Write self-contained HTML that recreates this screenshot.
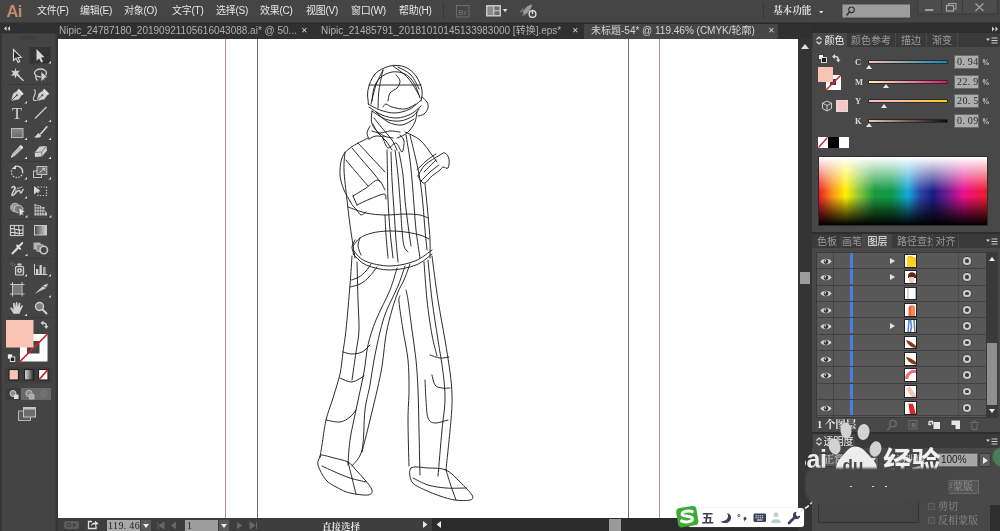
<!DOCTYPE html>
<html lang="zh">
<head>
<meta charset="utf-8">
<title>Illustrator</title>
<style>
*{box-sizing:border-box;margin:0;padding:0}
html,body{width:1000px;height:531px;overflow:hidden;background:#454545}
body{position:relative;will-change:transform;font-family:"Liberation Sans","Noto Sans CJK SC",sans-serif;font-size:11px;color:#e0e0e0}
.abs{position:absolute}
.song{font-family:"Liberation Serif","Noto Serif CJK SC",serif}
#menubar{left:0;top:0;width:1000px;height:23px;background:#454545;border-bottom:1px solid #3a3a3a}
#menubar span{position:absolute;top:4px;white-space:nowrap;font-size:10px;line-height:14px;color:#e6e6e6;letter-spacing:-0.250px}
#tabbar{left:58px;top:23px;width:754px;height:16px;background:#303030;border-top:1px solid #282828}
#tabbar span{position:absolute;top:0px;font-size:10px;line-height:14px;white-space:nowrap;color:#b0b0b0}
#tabbar .x{color:#d0d0d0;font-size:7.500px;margin-left:-1px}
#canvas{left:58px;top:39px;width:740px;height:479px;background:#fff}
</style>
</head>
<body>
<div id="menubar" class="abs">
<span style="left:6.500px;top:1px;font-size:16.500px;line-height:20px;color:#c48c6c;font-weight:bold;letter-spacing:-0.700px">Ai</span>
<span style="left:37px">文件(F)</span>
<span style="left:80px">编辑(E)</span>
<span style="left:124px">对象(O)</span>
<span style="left:172px">文字(T)</span>
<span style="left:216px">选择(S)</span>
<span style="left:260px">效果(C)</span>
<span style="left:306px">视图(V)</span>
<span style="left:351px">窗口(W)</span>
<span style="left:399px">帮助(H)</span>
<span class="song" style="left:773px;font-size:9.700px;letter-spacing:-0.100px;font-weight:bold;color:#dcdcdc">基本功能</span>
<svg class="abs" style="left:440px;top:0" width="110" height="23" viewBox="440 0 110 23">
 <path d="M443.500 3V19" stroke="#383838" stroke-width="1"/>
 <rect x="456.500" y="5.500" width="12.500" height="11.500" fill="none" stroke="#6c6c6c" stroke-width="1"/>
 <text x="458.300" y="14.500" font-family="'Liberation Sans',sans-serif" font-weight="bold" font-size="7.500" fill="#6c6c6c">Br</text>
 <rect x="486" y="5" width="15" height="11.500" fill="#c6c6c6"/>
 <rect x="487.500" y="6.500" width="5.500" height="8.500" fill="#8a8a8a"/><rect x="494.300" y="6.500" width="5.200" height="3.700" fill="#6e6e6e"/><rect x="494.300" y="11.300" width="5.200" height="3.700" fill="#6e6e6e"/>
 <path d="M502.800 9h4.600l-2.300 3.200z" fill="#e0e0e0"/>
 <path d="M532 4.500C528 5 524 9 522.500 13L525 14.500C528 13 531.500 9 532 4.500Z" fill="#9a9a9a"/>
 <path d="M520.500 12L523.500 9M522.500 15.500L526 13.500" stroke="#8a8a8a" stroke-width="1.200"/>
 <circle cx="532.500" cy="14" r="3.400" fill="#4a4a4a" stroke="#e0e0e0" stroke-width="1.300"/><path d="M532.500 9.800V14" stroke="#e0e0e0" stroke-width="1.300"/>
</svg>
<div class="abs" style="left:763px;top:3px;width:1px;height:16px;background:#383838"></div>
<svg class="abs" style="left:815px;top:0" width="185" height="23" viewBox="815 0 185 23">
 <path d="M819 11h4.400l-2.200 2.600z" fill="#e6e6e6"/>
 <rect x="842" y="4" width="68.500" height="14" fill="#9c9c9c" stroke="#3c3c3c" stroke-width="0.800"/>
 <circle cx="851.500" cy="9.800" r="2.800" fill="none" stroke="#2e2e2e" stroke-width="1.100"/><path d="M849.500 12L846.500 15.500" stroke="#2e2e2e" stroke-width="1.400"/>
 <rect x="918" y="-1" width="23.500" height="15" fill="#4c4c4c" stroke="#3a3a3a" stroke-width="1"/>
 <rect x="941.500" y="-1" width="21" height="15" fill="#4c4c4c" stroke="#3a3a3a" stroke-width="1"/>
 <rect x="962.500" y="-1" width="35" height="15" fill="#4c4c4c" stroke="#3a3a3a" stroke-width="1"/>
 <path d="M925 10h8.500" stroke="#a8a8a8" stroke-width="1.800"/>
 <path d="M948.500 5V3.500h7.500v5.500h-1.800" fill="none" stroke="#a0a0a0" stroke-width="1.100"/><rect x="946.500" y="5.500" width="7" height="5.500" fill="none" stroke="#a8a8a8" stroke-width="1.200"/>
 <path d="M975.500 3.500L983.500 11M983.500 3.500L975.500 11" stroke="#a0a0a0" stroke-width="1.300"/>
</svg>
</div>
<div id="tabbar" class="abs">
<span style="left:1px">Nipic_24787180_20190921105616043088.ai* @ 50...</span><span class="x" style="left:244px">✕</span>
<span style="left:263px">Nipic_21485791_20181010145133983000 [转换].eps*</span><span class="x" style="left:515px">✕</span>
<div class="abs" style="left:526px;top:0;width:194px;height:15px;background:#464646"></div>
<span style="left:533px;color:#d4d4d4">未标题-54* @ 119.46% (CMYK/轮廓)</span><span class="x" style="left:711px">✕</span>
</div>
<div id="canvas" class="abs"></div>
<svg id="tb" class="abs" style="left:0;top:23px" width="58" height="508" viewBox="0 23 58 508">
<defs>
<linearGradient id="gh" x1="0" y1="0" x2="1" y2="0"><stop offset="0" stop-color="#e8e8e8"/><stop offset="1" stop-color="#222"/></linearGradient>
<linearGradient id="gv" x1="0" y1="0" x2="0" y2="1"><stop offset="0" stop-color="#8a8a8a"/><stop offset="1" stop-color="#6a6a6a"/></linearGradient>
<linearGradient id="gh2" x1="0" y1="0" x2="1" y2="0"><stop offset="0" stop-color="#4a4a4a"/><stop offset="1" stop-color="#d4d4d4"/></linearGradient>
<path id="tri" d="M0 0 L-2.6 0 L0 -2.6Z" fill="#d8d8d8"/>
</defs>
<rect x="0" y="23" width="58" height="508" fill="#444"/>
<rect x="0" y="23" width="58" height="10" fill="#303030"/>
<rect x="0" y="33" width="58" height="1" fill="#3d3d3d"/>
<rect x="0" y="23" width="1.500" height="508" fill="#343434"/>
<rect x="55.500" y="33" width="2.500" height="498" fill="#363636"/>
<path d="M6.5 26 L4 28.5 L6.5 31Z M10 26 L7.5 28.5 L10 31Z" fill="#cfcfcf"/>
<g fill="#3a3a3a"><rect x="20" y="36" width="16" height="1"/><rect x="20" y="38" width="16" height="1"/></g>
<!-- separators -->
<g fill="#3a3a3a"><rect x="7" y="84" width="45" height="1"/><rect x="7" y="161" width="45" height="1"/><rect x="7" y="219" width="45" height="1"/><rect x="7" y="258" width="45" height="1"/><rect x="7" y="317" width="45" height="1"/></g>
<!-- row1 -->
<rect x="29.5" y="47" width="21" height="16.5" fill="#343434"/>
<path d="M13.5 49.5 L13.500 60.5 L16 58.2 L18 62.3 L19.8 61.4 L17.9 57.500 L21.2 57.2Z" fill="#2c2c2c" stroke="#dcdcdc" stroke-width="1.100" stroke-linejoin="miter"/>
<path d="M36.500 49 L36.500 60.800 L39.2 58.4 L41.2 62.500 L43 61.600 L41 57.600 L44.5 57.300Z" fill="#d8d8d8"/>
<use href="#tri" x="51" y="63.5"/>
<!-- row2 magic wand -->
<path d="M15.5 68 L16.600 71.300 L20 70.500 L17.800 73.200 L20 76 L16.700 75.200 L15.500 78.500 L14.300 75.200 L11 76 L13.200 73.200 L11 70.500 L14.400 71.300Z" fill="#cfcfcf"/>
<path d="M17.500 75 L23.500 80.800" stroke="#cfcfcf" stroke-width="1.500"/>
<!-- lasso -->
<ellipse cx="40.5" cy="73" rx="6" ry="4" fill="none" stroke="#cfcfcf" stroke-width="1.300"/>
<path d="M36 76 C35 78 36.500 79.500 37.500 80.500" fill="none" stroke="#cfcfcf" stroke-width="1.200"/>
<path d="M41 71.500 L41 81.500 L43.300 79.500 L44.800 80.800 L44.500 78 L47.500 77.200Z" fill="#cfcfcf" stroke="#444" stroke-width="0.600"/>
<!-- row3 pen -->
<g id="pen"><path d="M11 101 L13.200 93.500 L18.500 90 L22.500 94 L19 99.200Z" fill="#cfcfcf"/><path d="M11 101 L16.500 95.500" stroke="#444" stroke-width="0.900"/><circle cx="16.800" cy="95.200" r="1" fill="#444"/><path d="M18.800 88.800 L23.700 93.700 L22.200 95.200 L17.300 90.300Z" fill="#e2e2e2"/></g>
<use href="#tri" x="27" y="103.500"/>
<use href="#pen" x="25.500" y="0"/>
<path d="M34 89.500 C36.500 90.500 35 94.500 33.800 97 C32.500 99.800 34 101.200 36.500 100.200" fill="none" stroke="#cfcfcf" stroke-width="1.100"/>
<!-- row4 T -->
<text x="17" y="119.300" font-family="Liberation Serif,serif" font-size="16.500" text-anchor="middle" fill="#d4d4d4">T</text>
<use href="#tri" x="27" y="122"/>
<path d="M35 118.500 L46.500 107" stroke="#cfcfcf" stroke-width="1.200"/>
<use href="#tri" x="51" y="122"/>
<!-- row5 rect / brush -->
<rect x="11.500" y="128.500" width="11.500" height="9" fill="url(#gv)" stroke="#b8b8b8" stroke-width="1"/>
<use href="#tri" x="27" y="140"/>
<path d="M47.300 126.200 L40.300 134.200" stroke="#d8d8d8" stroke-width="1.600"/>
<path d="M38.200 133 L41.300 135.800 C40.500 137.800 36.500 138.500 33.800 137 C36 136.500 36.800 134.800 38.200 133Z" fill="#d8d8d8"/>
<use href="#tri" x="51" y="140"/>
<!-- row6 pencil / eraser -->
<path d="M20 145.500 L22.800 148.300 L14.500 156.300 L11 157.600 L12.200 153.800Z" fill="#bdbdbd"/>
<path d="M19.200 146.300 L22 149.100 L23 148 C23.500 147 21.500 145 20.400 145.300Z" fill="#e6e6e6"/>
<path d="M11 157.600 L11.600 155.600 L13 157Z" fill="#eee"/>
<use href="#tri" x="27" y="159"/>
<path d="M39.500 146.500 L46.500 146 L47 150.500 L42 156.500 L35 157 L34.700 152.500Z" fill="#cfcfcf"/>
<path d="M34.700 152.500 L41.600 152 L46.500 146 M41.600 152 L42 156.500" stroke="#6a6a6a" stroke-width="0.800" fill="none"/>
<use href="#tri" x="51" y="159"/>
<!-- row7 rotate / scale -->
<path d="M14.500 166.800 A5.600 5.600 0 0 1 22.600 172" fill="none" stroke="#cfcfcf" stroke-width="1.400"/>
<path d="M22.600 172 A5.600 5.600 0 1 1 12.500 168.600" fill="none" stroke="#cfcfcf" stroke-width="1.400" stroke-dasharray="1.400 1.500"/>
<path d="M12 168.800 L15.800 165.200 L16 169.200Z" fill="#dcdcdc"/>
<use href="#tri" x="27" y="179.500"/>
<rect x="33.500" y="171" width="8" height="6.500" fill="none" stroke="#c4c4c4" stroke-width="1"/>
<rect x="37" y="166.500" width="9.800" height="8" fill="#6a6a6a" stroke="#c4c4c4" stroke-width="1"/>
<path d="M39.500 172.500 L44.500 168.500 M42 168.300 L44.800 168.300 L44.800 171" stroke="#d8d8d8" stroke-width="0.900" fill="none"/>
<use href="#tri" x="51" y="179.500"/>
<!-- row8 width / free transform -->
<path d="M11.500 188 C13 185.500 15.500 186 14.500 189 C13.500 192 11 194 12 195.500 C13.500 196.500 16 191.500 18.500 190.500 C20.500 189.800 19.500 193 21 193 C22.500 192.500 22 189 23.800 189.500" fill="none" stroke="#cfcfcf" stroke-width="1.500"/>
<path d="M14 186 C17 188 16 193 14 195.500 M17 188 C19 188.500 21 187.500 22.500 187" fill="none" stroke="#cfcfcf" stroke-width="0.900"/>
<use href="#tri" x="27" y="198.500"/>
<path d="M34 186 L34 194.500 L36.300 192.600 L40.500 191Z" fill="#d4d4d4"/>
<rect x="38" y="187" width="8.500" height="8.500" fill="none" stroke="#cfcfcf" stroke-width="1.200" stroke-dasharray="1.200 1.600"/>
<!-- row9 shape builder / perspective -->
<circle cx="15" cy="207.500" r="4.300" fill="#8a8a8a" stroke="#c4c4c4" stroke-width="1"/>
<ellipse cx="18.500" cy="209" rx="4.500" ry="3.800" fill="#7a7a7a" stroke="#c4c4c4" stroke-width="1"/>
<circle cx="13.500" cy="207" r="1.400" fill="none" stroke="#c4c4c4" stroke-width="0.700"/>
<path d="M19 207.500 L19.500 216.300 L21.400 214.400 L23.800 215.600 L22.500 212.800 L25 211.800Z" fill="#e0e0e0" stroke="#444" stroke-width="0.500"/>
<use href="#tri" x="27.500" y="217.500"/>
<path d="M34.500 203.500 L34.500 215.500 L47 215.500 L47 212.500 L44.500 210 L44.500 207 L42 207 L39.500 205 L37 205 Z" fill="#c8c8c8"/>
<path d="M36.800 204 V215.500 M39.300 205 V215.500 M41.800 207 V215.500 M44.300 209 V215.500 M34.500 206.500 H39.500 M34.500 209.300 H44.500 M34.500 212.300 H47" stroke="#444" stroke-width="0.700" fill="none"/>
<use href="#tri" x="51.500" y="217.500"/>
<!-- row10 mesh / gradient -->
<rect x="10.500" y="225.500" width="12.500" height="10" fill="#3a3a3a" stroke="#c8c8c8" stroke-width="1.200"/>
<path d="M10.500 229 C14 227 18 232 23 229.500 M10.500 232.800 C14 231 18 235 23 233 M14.500 225.500 C13 229 17 232 14.500 235.500 M19 225.500 C17.500 229 21 232 19 235.500" fill="none" stroke="#d8d8d8" stroke-width="1.100"/>
<rect x="34.500" y="225.500" width="12" height="9.500" fill="url(#gh2)" stroke="#c4c4c4" stroke-width="1"/>
<!-- row11 eyedropper / blend -->
<path d="M12 254.500 L11.300 253.300 L17.500 246.500 L19.300 248.200 L13 254.300Z" fill="#d8d8d8"/>
<path d="M17 245.500 L20.300 248.800 M18.300 247 L22.300 243 " stroke="#dcdcdc" stroke-width="1.800" stroke-linecap="round" fill="none"/>
<use href="#tri" x="27.500" y="256"/>
<rect x="33.500" y="242.500" width="7" height="7" fill="#b4b4b4"/>
<rect x="36.500" y="244.500" width="7" height="7" rx="1.500" fill="#8c8c8c" stroke="#bdbdbd" stroke-width="0.800"/>
<circle cx="43.800" cy="250" r="3.700" fill="#444" stroke="#c8c8c8" stroke-width="1.600"/>
<!-- row12 symbol sprayer / graph -->
<rect x="15.500" y="266.500" width="8" height="8.500" rx="1" fill="#5a5a5a" stroke="#cfcfcf" stroke-width="1.200"/>
<rect x="17.500" y="263.500" width="4" height="2" fill="#cfcfcf"/>
<circle cx="19.500" cy="270.500" r="2.300" fill="#e2e2e2"/><circle cx="19.500" cy="270.500" r="0.900" fill="#222"/>
<path d="M10 264 h1.200 M12.500 263 h1.200 M12 265.500 h1.200 M14.300 264.500 h1" stroke="#9a9a9a" stroke-width="0.800"/>
<use href="#tri" x="27" y="276.500"/>
<path d="M34.500 264 V274.500 H47.500" stroke="#cfcfcf" stroke-width="1" fill="none"/>
<rect x="36" y="269" width="2.300" height="5" fill="#cfcfcf"/><rect x="39.500" y="265" width="2.300" height="9" fill="#cfcfcf"/><rect x="43" y="267" width="2.600" height="7" fill="#a8a8a8"/>
<use href="#tri" x="51" y="276.500"/>
<!-- row13 artboard / slice -->
<rect x="13" y="285" width="8.500" height="8.500" fill="#7a7a7a"/>
<path d="M12.500 282 V296.500 M22 282 V296.500 M10 284.500 H24.500 M10 294 H24.500" stroke="#c4c4c4" stroke-width="1" fill="none"/>
<path d="M34.500 294 L44 285 L48.300 283.500 L45.500 288.500 L40 291Z" fill="#cfcfcf"/>
<path d="M43 286 L46 288" stroke="#444" stroke-width="0.800"/>
<use href="#tri" x="51" y="297.500"/>
<!-- row14 hand / zoom -->
<path d="M13.500 313.800 L10.300 308.500 C10 307.500 11.300 307.200 12 308 L13.500 309.800 L13 303.500 C13.200 302.300 14.600 302.500 14.700 303.500 L15.300 307 L15.800 302.700 C16 301.600 17.500 301.700 17.500 302.800 L17.600 307 L18.800 303.300 C19.200 302.300 20.600 302.700 20.400 303.800 L19.800 307.800 L21.600 305.500 C22.300 304.800 23.300 305.500 22.800 306.500 L20.500 311 L19.500 313.800Z" fill="#cfcfcf"/>
<use href="#tri" x="27" y="316"/>
<circle cx="39.500" cy="306.500" r="4" fill="#7c7c7c" stroke="#cfcfcf" stroke-width="1.400"/>
<path d="M42.500 309.500 L46.500 313.500" stroke="#cfcfcf" stroke-width="2" stroke-linecap="round"/>
<!-- fill / stroke -->
<rect x="20" y="334" width="27.500" height="27.500" fill="#fff"/>
<rect x="27" y="341" width="12.500" height="12.500" fill="#444"/>
<path d="M19.500 362 L47.500 334" stroke="#c8232c" stroke-width="1.700"/>
<rect x="6" y="320" width="27.500" height="27.500" fill="#f9c4b3"/>
<path d="M40.500 323 L43.500 320.500 V322.300 C46 322.300 47 323.500 47 326 H48.500 L46.200 329 L44 326 H45.500 C45.500 324.500 45 323.800 43.500 323.800 V325.500Z" fill="#cfcfcf"/>
<rect x="7.500" y="354" width="5" height="5" fill="#f0f0f0" stroke="#333" stroke-width="0.600"/>
<rect x="10.300" y="357" width="4.500" height="4.500" fill="#222" stroke="#f0f0f0" stroke-width="0.900"/>
<!-- colour mode -->
<rect x="5" y="367" width="47" height="16" fill="#3e3e3e"/>
<rect x="9" y="369.500" width="9.500" height="10.500" fill="#f9c4b3" stroke="#262626" stroke-width="1.200"/>
<rect x="24.500" y="369.500" width="9.500" height="10.500" fill="url(#gh)" stroke="#262626" stroke-width="1.200"/>
<rect x="38.500" y="369.500" width="9.500" height="10.500" fill="#fff" stroke="#262626" stroke-width="1.200"/>
<path d="M39.200 379.500 L47.500 370" stroke="#d0202a" stroke-width="1.800"/>
<!-- draw modes -->
<rect x="6" y="388" width="45" height="12" fill="#6a6a6a"/>
<rect x="6" y="388" width="15" height="12" fill="#3c3c3c"/>
<circle cx="13" cy="393.500" r="3" fill="#8a8a8a" stroke="#cfcfcf" stroke-width="1"/><rect x="14" y="394.500" width="4.500" height="4.500" fill="#dcdcdc"/>
<circle cx="29" cy="393.500" r="3.200" fill="#8a8a8a" stroke="#bdbdbd" stroke-width="1"/><rect x="29.500" y="394.500" width="4.500" height="4.500" fill="#a8a8a8" stroke="#c8c8c8" stroke-width="0.600"/>
<circle cx="43.500" cy="393.500" r="3" fill="none" stroke="#7c7c7c" stroke-width="1"/><circle cx="43.500" cy="393.500" r="1.300" fill="#777"/>
<!-- screen mode -->
<rect x="18.500" y="411" width="12" height="9.500" fill="#5c5c5c" stroke="#b4b4b4" stroke-width="1"/>
<rect x="23.500" y="407.500" width="12" height="9.500" fill="#6c6c6c" stroke="#c4c4c4" stroke-width="1"/>
<rect x="23.500" y="407.500" width="12" height="2" fill="#c4c4c4"/>
</svg>
<svg class="abs" style="left:58px;top:39px" width="740" height="479" viewBox="58 39 740 479">
<path d="M225.5 39V518M659.500 39V518" stroke="#c58a8a" stroke-width="1" fill="none"/>
<path d="M257.500 39V518M628.500 39V518" stroke="#6e6e6e" stroke-width="1" fill="none"/>
<g fill="none" stroke="#141414" stroke-width="0.900" stroke-linecap="round" stroke-linejoin="round">
<path d="M368.5 104.0 C368.4 101.7 366.9 95.0 368.0 90.0 C369.1 85.0 371.3 78.0 375.0 74.0 C378.7 70.0 385.0 67.2 390.0 66.0 C395.0 64.8 400.7 65.3 405.0 67.0 C409.3 68.7 413.2 72.2 416.0 76.0 C418.8 79.8 421.2 85.8 422.0 90.0 C422.8 94.2 421.2 99.2 421.0 101.0"/>
<path d="M368.0 104.0 C370.0 105.0 375.5 108.5 380.0 110.0 C384.5 111.5 390.0 113.2 395.0 113.0 C400.0 112.8 405.7 111.2 410.0 109.0 C414.3 106.8 419.2 101.5 421.0 100.0"/>
<path d="M369.0 107.0 C371.2 108.3 377.3 113.2 382.0 115.0 C386.7 116.8 392.2 118.2 397.0 118.0 C401.8 117.8 407.0 116.0 411.0 114.0 C415.0 112.0 419.3 107.3 421.0 106.0"/>
<path d="M372.0 111.0 C374.2 112.3 380.3 117.3 385.0 119.0 C389.7 120.7 395.3 121.5 400.0 121.0 C404.7 120.5 409.8 118.0 413.0 116.0 C416.2 114.0 418.0 110.2 419.0 109.0"/>
<path d="M369.0 85.0 C373.3 85.0 386.3 85.0 395.0 85.0 C403.7 85.0 416.7 85.0 421.0 85.0"/>
<path d="M371.0 104.0 C371.8 100.8 374.0 90.7 376.0 85.0 C378.0 79.3 381.8 72.5 383.0 70.0"/>
<path d="M383.0 70.0 C382.3 73.3 379.8 83.7 379.0 90.0 C378.2 96.3 378.2 105.0 378.0 108.0"/>
<path d="M393.0 66.0 C395.5 68.0 403.7 73.2 408.0 78.0 C412.3 82.8 417.2 92.2 419.0 95.0"/>
<path d="M388.0 101.0 C388.3 99.7 388.5 95.2 390.0 93.0 C391.5 90.8 395.3 90.0 397.0 88.0 C398.7 86.0 400.2 83.2 400.0 81.0 C399.8 78.8 396.7 76.0 396.0 75.0"/>
<path d="M383.0 107.0 C383.5 106.5 384.5 104.0 386.0 104.0 C387.5 104.0 388.8 106.2 392.0 107.0 C395.2 107.8 401.0 109.5 405.0 109.0 C409.0 108.5 414.2 104.8 416.0 104.0"/>
<path d="M422.0 97.0 C422.8 97.8 426.0 100.2 427.0 102.0 C428.0 103.8 428.5 106.0 428.0 108.0 C427.5 110.0 425.7 112.7 424.0 114.0 C422.3 115.3 419.0 115.7 418.0 116.0"/>
<path d="M372.0 111.0 C371.9 112.8 370.8 118.8 371.5 122.0 C372.2 125.2 373.9 127.7 376.0 130.0 C378.1 132.3 381.2 134.7 384.0 136.0 C386.8 137.3 391.5 137.7 393.0 138.0"/>
<path d="M417.0 112.0 C416.7 113.7 416.2 119.0 415.0 122.0 C413.8 125.0 411.8 127.8 410.0 130.0 C408.2 132.2 406.2 133.7 404.0 135.0 C401.8 136.3 398.2 137.5 397.0 138.0"/>
<path d="M374.0 118.0 C375.3 119.7 379.0 124.3 382.0 128.0 C385.0 131.7 389.5 136.3 392.0 140.0 C394.5 143.7 396.2 148.3 397.0 150.0"/>
<path d="M372.0 131.0 C373.3 131.3 377.0 133.0 380.0 133.0 C383.0 133.0 386.7 131.2 390.0 131.0 C393.3 130.8 398.3 131.8 400.0 132.0"/>
<path d="M372.0 101.0 C372.3 98.8 372.7 91.8 374.0 88.0 C375.3 84.2 377.0 80.7 380.0 78.0 C383.0 75.3 387.8 72.7 392.0 72.0 C396.2 71.3 401.3 72.2 405.0 74.0 C408.7 75.8 411.5 79.0 414.0 83.0 C416.5 87.0 419.0 95.5 420.0 98.0"/>
<path d="M398.0 67.0 C400.2 68.3 407.5 71.3 411.0 75.0 C414.5 78.7 417.7 86.7 419.0 89.0"/>
<path d="M376.0 112.0 C378.0 113.7 383.7 119.8 388.0 122.0 C392.3 124.2 397.7 125.5 402.0 125.0 C406.3 124.5 412.0 120.0 414.0 119.0"/>
<path d="M373.0 124.0 C373.8 125.5 375.8 130.2 378.0 133.0 C380.2 135.8 383.7 138.2 386.0 141.0 C388.3 143.8 391.0 148.5 392.0 150.0"/>
<path d="M369.0 139.0 C370.2 138.5 373.5 136.3 376.0 136.0 C378.5 135.7 382.7 136.8 384.0 137.0"/>
<path d="M370.0 126.0 C369.5 127.2 367.2 130.8 367.0 133.0 C366.8 135.2 368.7 138.0 369.0 139.0"/>
<path d="M368.0 138.0 C365.0 139.7 354.3 144.7 350.0 148.0 C345.7 151.3 343.7 153.5 342.0 158.0 C340.3 162.5 339.7 169.7 340.0 175.0 C340.3 180.3 342.3 185.7 344.0 190.0 C345.7 194.3 349.0 199.2 350.0 201.0"/>
<path d="M345.0 152.0 C344.8 155.0 343.7 162.0 344.0 170.0 C344.3 178.0 346.0 190.8 347.0 200.0 C348.0 209.2 349.0 217.5 350.0 225.0 C351.0 232.5 352.2 239.5 353.0 245.0 C353.8 250.5 354.7 255.8 355.0 258.0"/>
<path d="M353.0 196.0 C355.2 194.7 361.8 190.7 366.0 188.0 C370.2 185.3 374.8 179.7 378.0 180.0 C381.2 180.3 383.8 188.3 385.0 190.0"/>
<path d="M357.0 205.0 C359.2 204.0 365.5 200.8 370.0 199.0 C374.5 197.2 381.3 194.0 384.0 194.0 C386.7 194.0 385.7 198.2 386.0 199.0"/>
<path d="M353 196 L357 205"/>
<path d="M357.0 210.0 C357.7 210.8 359.5 214.7 361.0 215.0 C362.5 215.3 365.2 212.5 366.0 212.0"/>
<path d="M352.0 148.0 C353.7 150.0 358.2 155.5 362.0 160.0 C365.8 164.5 372.0 171.3 375.0 175.0 C378.0 178.7 379.2 180.8 380.0 182.0"/>
<path d="M358.0 143.0 C360.3 145.5 367.5 153.2 372.0 158.0 C376.5 162.8 382.8 169.7 385.0 172.0"/>
<path d="M348.0 207.0 C351.0 208.0 359.8 211.7 366.0 213.0 C372.2 214.3 378.5 214.8 385.0 215.0 C391.5 215.2 399.2 214.0 405.0 214.0 C410.8 214.0 416.2 214.3 420.0 215.0 C423.8 215.7 426.7 217.5 428.0 218.0"/>
<path d="M405.0 132.0 C407.5 133.3 415.5 136.2 420.0 140.0 C424.5 143.8 429.2 151.3 432.0 155.0 C434.8 158.7 436.2 160.8 437.0 162.0"/>
<path d="M418.0 176.0 C419.2 174.2 421.3 168.5 425.0 165.0 C428.7 161.5 436.7 157.0 440.0 155.0 C443.3 153.0 443.5 152.3 445.0 153.0 C446.5 153.7 448.5 156.5 449.0 159.0 C449.5 161.5 449.0 166.7 448.0 168.0 C447.0 169.3 444.3 166.7 443.0 167.0 C441.7 167.3 441.8 168.5 440.0 170.0 C438.2 171.5 434.5 173.8 432.0 176.0 C429.5 178.2 426.8 182.2 425.0 183.0 C423.2 183.8 422.2 182.2 421.0 181.0 C419.8 179.8 418.5 176.8 418.0 176.0"/>
<path d="M417.0 170.0 C418.5 168.5 422.8 163.7 426.0 161.0 C429.2 158.3 434.3 155.2 436.0 154.0"/>
<path d="M421.0 181.0 C422.5 179.5 427.0 174.7 430.0 172.0 C433.0 169.3 437.5 166.2 439.0 165.0"/>
<path d="M425.0 184.0 C425.5 189.2 427.2 205.7 428.0 215.0 C428.8 224.3 429.7 232.8 430.0 240.0 C430.3 247.2 430.0 255.0 430.0 258.0"/>
<path d="M387.0 150.0 C387.1 154.2 387.3 166.7 387.5 175.0 C387.7 183.3 387.6 190.8 388.0 200.0 C388.4 209.2 389.2 220.3 390.0 230.0 C390.8 239.7 392.5 253.3 393.0 258.0"/>
<path d="M391.0 152.0 C391.2 156.7 391.5 170.3 392.0 180.0 C392.5 189.7 393.3 200.0 394.0 210.0 C394.7 220.0 395.3 231.3 396.0 240.0 C396.7 248.7 397.7 258.3 398.0 262.0"/>
<path d="M395.0 150.0 C395.5 154.2 397.2 166.7 398.0 175.0 C398.8 183.3 399.3 190.8 400.0 200.0 C400.7 209.2 401.3 222.3 402.0 230.0 C402.7 237.7 403.0 242.3 404.0 246.0 C405.0 249.7 407.3 251.0 408.0 252.0"/>
<path d="M406.0 135.0 C406.7 139.2 409.0 152.5 410.0 160.0 C411.0 167.5 411.3 172.5 412.0 180.0 C412.7 187.5 413.3 196.7 414.0 205.0 C414.7 213.3 415.0 221.2 416.0 230.0 C417.0 238.8 419.3 253.3 420.0 258.0"/>
<path d="M410.0 135.0 C411.0 139.2 414.3 152.5 416.0 160.0 C417.7 167.5 418.8 172.5 420.0 180.0 C421.2 187.5 422.2 196.7 423.0 205.0 C423.8 213.3 424.3 222.5 425.0 230.0 C425.7 237.5 426.7 246.7 427.0 250.0"/>
<path d="M383.0 138.0 C383.8 139.7 385.8 147.2 388.0 148.0 C390.2 148.8 393.7 142.3 396.0 143.0 C398.3 143.7 400.7 152.3 402.0 152.0 C403.3 151.7 404.3 143.8 404.0 141.0 C403.7 138.2 400.7 136.0 400.0 135.0"/>
<path d="M353.0 246.0 C354.2 244.7 356.8 240.2 360.0 238.0 C363.2 235.8 367.3 234.2 372.0 233.0 C376.7 231.8 382.5 231.2 388.0 231.0 C393.5 230.8 399.7 231.3 405.0 232.0 C410.3 232.7 416.0 233.8 420.0 235.0 C424.0 236.2 427.5 238.3 429.0 239.0"/>
<path d="M355.0 240.0 C354.5 241.2 352.2 244.7 352.0 247.0 C351.8 249.3 353.7 252.8 354.0 254.0"/>
<path d="M350.0 201.0 C350.5 201.8 351.8 204.5 353.0 206.0 C354.2 207.5 356.3 209.3 357.0 210.0"/>
<path d="M346.0 160.0 C347.7 162.0 352.3 167.7 356.0 172.0 C359.7 176.3 366.0 183.7 368.0 186.0"/>
<path d="M399.0 152.0 C399.7 155.8 402.0 167.0 403.0 175.0 C404.0 183.0 404.2 191.7 405.0 200.0 C405.8 208.3 407.0 217.3 408.0 225.0 C409.0 232.7 410.5 242.5 411.0 246.0"/>
<path d="M385.0 215.0 C385.2 218.3 385.5 227.8 386.0 235.0 C386.5 242.2 387.7 254.2 388.0 258.0"/>
<path d="M360.0 238.0 C359.7 239.3 357.8 243.2 358.0 246.0 C358.2 248.8 360.5 253.5 361.0 255.0"/>
<path d="M436.0 160.0 C435.0 161.0 432.0 164.0 430.0 166.0 C428.0 168.0 425.0 171.0 424.0 172.0"/>
<path d="M353.0 250.0 C355.0 251.8 358.8 258.3 365.0 261.0 C371.2 263.7 381.7 266.0 390.0 266.0 C398.3 266.0 408.0 263.7 415.0 261.0 C422.0 258.3 429.2 251.8 432.0 250.0"/>
<path d="M353.0 254.0 C355.2 255.8 359.8 262.3 366.0 265.0 C372.2 267.7 381.7 270.0 390.0 270.0 C398.3 270.0 409.0 267.7 416.0 265.0 C423.0 262.3 429.3 255.8 432.0 254.0"/>
<path d="M352.0 256.0 C351.7 260.8 351.0 272.7 350.0 285.0 C349.0 297.3 347.2 318.8 346.0 330.0 C344.8 341.2 344.0 344.7 343.0 352.0 C342.0 359.3 341.7 366.3 340.0 374.0 C338.3 381.7 335.3 390.3 333.0 398.0 C330.7 405.7 327.8 412.2 326.0 420.0 C324.2 427.8 323.0 438.8 322.0 445.0 C321.0 451.2 320.3 455.0 320.0 457.0"/>
<path d="M357.0 262.0 C357.2 268.3 357.7 288.7 358.0 300.0 C358.3 311.3 359.3 321.3 359.0 330.0 C358.7 338.7 357.2 343.7 356.0 352.0 C354.8 360.3 352.7 375.3 352.0 380.0"/>
<path d="M351.5 280.0 C352.8 279.5 356.6 278.5 359.0 277.0 C361.4 275.5 364.0 273.2 366.0 271.0 C368.0 268.8 370.2 265.2 371.0 264.0"/>
<path d="M350.0 287.0 C351.7 286.5 356.8 285.7 360.0 284.0 C363.2 282.3 366.2 279.8 369.0 277.0 C371.8 274.2 375.7 268.7 377.0 267.0"/>
<path d="M397.0 268.0 C395.8 271.7 393.5 281.3 390.0 290.0 C386.5 298.7 379.7 310.8 376.0 320.0 C372.3 329.2 370.0 336.3 368.0 345.0 C366.0 353.7 366.0 361.2 364.0 372.0 C362.0 382.8 358.3 398.7 356.0 410.0 C353.7 421.3 351.3 430.8 350.0 440.0 C348.7 449.2 348.3 460.8 348.0 465.0"/>
<path d="M405.0 266.0 C403.8 269.3 401.2 278.3 398.0 286.0 C394.8 293.7 389.0 304.3 386.0 312.0 C383.0 319.7 382.0 324.0 380.0 332.0 C378.0 340.0 375.7 351.2 374.0 360.0 C372.3 368.8 371.5 376.7 370.0 385.0 C368.5 393.3 366.3 399.2 365.0 410.0 C363.7 420.8 364.2 440.7 362.0 450.0 C359.8 459.3 353.7 463.3 352.0 466.0"/>
<path d="M410.0 264.0 C409.0 266.7 406.0 275.3 404.0 280.0 C402.0 284.7 400.0 287.0 398.0 292.0 C396.0 297.0 394.0 302.8 392.0 310.0 C390.0 317.2 387.8 324.7 386.0 335.0 C384.2 345.3 383.7 357.8 381.0 372.0 C378.3 386.2 373.2 406.7 370.0 420.0 C366.8 433.3 363.3 446.7 362.0 452.0"/>
<path d="M343.0 352.0 C344.5 352.3 348.8 354.0 352.0 354.0 C355.2 354.0 359.0 353.5 362.0 352.0 C365.0 350.5 368.7 346.2 370.0 345.0"/>
<path d="M340.0 378.0 C342.0 378.7 348.0 382.3 352.0 382.0 C356.0 381.7 362.0 377.0 364.0 376.0"/>
<path d="M326.0 420.0 C328.3 420.3 336.0 422.5 340.0 422.0 C344.0 421.5 347.3 419.0 350.0 417.0 C352.7 415.0 355.0 411.2 356.0 410.0"/>
<path d="M400.0 296.0 C399.8 297.0 398.5 296.3 399.0 302.0 C399.5 307.7 401.5 320.3 403.0 330.0 C404.5 339.7 407.0 350.0 408.0 360.0 C409.0 370.0 409.0 380.0 409.0 390.0 C409.0 400.0 408.0 407.3 408.0 420.0 C408.0 432.7 408.8 458.3 409.0 466.0"/>
<path d="M406.0 290.0 C406.3 291.7 407.0 293.3 408.0 300.0 C409.0 306.7 410.7 320.0 412.0 330.0 C413.3 340.0 415.0 350.0 416.0 360.0 C417.0 370.0 417.5 378.3 418.0 390.0 C418.5 401.7 418.7 415.8 419.0 430.0 C419.3 444.2 419.8 467.5 420.0 475.0"/>
<path d="M432.0 256.0 C433.0 263.3 435.8 286.0 438.0 300.0 C440.2 314.0 443.0 328.0 445.0 340.0 C447.0 352.0 448.8 362.8 450.0 372.0 C451.2 381.2 451.8 387.0 452.0 395.0 C452.2 403.0 452.0 407.5 451.0 420.0 C450.0 432.5 446.8 461.7 446.0 470.0"/>
<path d="M428.0 260.0 C428.7 266.7 430.3 286.7 432.0 300.0 C433.7 313.3 436.2 328.0 438.0 340.0 C439.8 352.0 441.8 362.0 443.0 372.0 C444.2 382.0 445.2 390.3 445.0 400.0 C444.8 409.7 443.2 417.3 442.0 430.0 C440.8 442.7 438.7 468.3 438.0 476.0"/>
<path d="M424.0 262.0 C424.5 268.3 425.7 287.8 427.0 300.0 C428.3 312.2 430.3 325.7 432.0 335.0 C433.7 344.3 436.2 352.5 437.0 356.0"/>
<path d="M430.0 355.0 C431.7 355.5 436.8 357.7 440.0 358.0 C443.2 358.3 447.5 357.2 449.0 357.0"/>
<path d="M432.0 375.0 C432.5 376.7 433.3 382.8 435.0 385.0 C436.7 387.2 439.5 387.5 442.0 388.0 C444.5 388.5 448.7 388.0 450.0 388.0"/>
<path d="M425.0 380.0 C425.2 383.3 425.5 393.7 426.0 400.0 C426.5 406.3 426.5 414.2 428.0 418.0 C429.5 421.8 431.7 422.7 435.0 423.0 C438.3 423.3 445.8 420.5 448.0 420.0"/>
<path d="M320.0 457.0 C319.3 458.7 317.0 461.2 318.0 465.0 C319.0 468.8 322.7 476.2 326.0 480.0 C329.3 483.8 334.0 485.8 338.0 488.0 C342.0 490.2 345.0 491.8 350.0 493.0 C355.0 494.2 364.3 495.5 368.0 495.0 C371.7 494.5 372.5 492.5 372.0 490.0 C371.5 487.5 367.7 483.3 365.0 480.0 C362.3 476.7 358.8 473.0 356.0 470.0 C353.2 467.0 351.7 464.0 348.0 462.0 C344.3 460.0 338.3 459.2 334.0 458.0 C329.7 456.8 324.3 455.2 322.0 455.0 C319.7 454.8 320.7 455.3 320.0 457.0Z"/>
<path d="M322.0 466.0 C324.2 467.0 330.3 470.0 335.0 472.0 C339.7 474.0 344.8 476.3 350.0 478.0 C355.2 479.7 363.3 481.3 366.0 482.0"/>
<path d="M348.0 462.0 C348.7 464.7 350.7 472.7 352.0 478.0 C353.3 483.3 355.3 491.3 356.0 494.0"/>
<path d="M411.0 468.0 C408.3 470.3 409.7 478.3 412.0 482.0 C414.3 485.7 420.3 487.7 425.0 490.0 C429.7 492.3 435.0 494.3 440.0 496.0 C445.0 497.7 450.0 499.3 455.0 500.0 C460.0 500.7 467.2 500.8 470.0 500.0 C472.8 499.2 473.7 498.0 472.0 495.0 C470.3 492.0 464.3 486.2 460.0 482.0 C455.7 477.8 451.3 472.3 446.0 470.0 C440.7 467.7 433.8 468.3 428.0 468.0 C422.2 467.7 413.7 465.7 411.0 468.0Z"/>
<path d="M413.0 478.0 C415.5 479.2 422.5 483.3 428.0 485.0 C433.5 486.7 439.7 487.5 446.0 488.0 C452.3 488.5 462.7 488.0 466.0 488.0"/>
<path d="M446.0 470.0 C446.8 472.7 449.3 481.0 451.0 486.0 C452.7 491.0 455.2 497.7 456.0 500.0"/>
</g>
</svg><style>
#dock{left:812px;top:23px;width:188px;height:508px;background:#484848}
.ptabs{position:absolute;left:0;width:188px;height:14px;background:#3a3a3a}
.ptabs span{position:absolute;top:0;height:14px;line-height:15px;font-size:10px;color:#9a9a9a;white-space:nowrap;text-align:center;border-right:1px solid #4a4a4a}
.ptabs span.on{background:#484848;color:#f0f0f0;border-right:none}
.sl{position:absolute;left:56px;width:80px;height:4px;border:0.500px solid #2a2a2a;border-radius:1px}
.lab{position:absolute;left:43px;font:bold 8.500px/10px "Liberation Serif","Noto Serif CJK SC",serif;color:#d8d8d8}
.val{position:absolute;left:142px;width:25px;height:14px;background:#adadad;border:1px solid #6a6a6a;color:#2a2a2a;font:10px/12px "Liberation Serif",serif;letter-spacing:0.400px;overflow:hidden;white-space:nowrap;padding-left:2px}
.val em,#status em{font-style:normal;padding-right:2.500px}
.pct{position:absolute;left:170px;font:bold 7.500px/10px "Liberation Serif",serif;color:#d0d0d0}
.th{position:absolute;width:0;height:0;border-left:3px solid transparent;border-right:3px solid transparent;border-bottom:4.500px solid #e8e8e8}
.row{position:absolute;left:5px;width:169px;height:16.350px;border-bottom:1.300px solid #424242}
.row i{position:absolute;left:33px;top:0;width:3.200px;height:15px;background:#4a7ddc}
.row b{position:absolute;left:87px;top:1px;width:13px;height:13.500px;background:#fff;border:0.500px solid #222;overflow:hidden}
.row u{position:absolute;left:146.200px;top:4px;width:7.500px;height:7.500px;border:2px solid #cacaca;border-radius:50%;background:#3c3c3c;box-shadow:0 0 0 0.900px #474747}
.row s{position:absolute;left:73px;top:4.500px;width:0;height:0;border-top:3px solid transparent;border-bottom:3px solid transparent;border-left:5px solid #e4e4e4}
</style>
<div id="vscroll" class="abs" style="left:798px;top:39px;width:14px;height:492px;background:#343434">
 <div class="abs" style="left:2.500px;top:5px;width:0;height:0;border-left:4px solid transparent;border-right:4px solid transparent;border-bottom:5.500px solid #e0e0e0"></div>
 <div class="abs" style="left:2px;top:233px;width:10px;height:12px;background:#9c9c9c"></div>
</div>
<div id="dock" class="abs">
 <div class="abs" style="left:0;top:0;width:188px;height:10px;background:#2e2e2e"></div>
 <svg class="abs" style="left:180px;top:2.500px" width="7" height="6" viewBox="0 0 7 6"><path d="M0 0.500L2.500 3L0 5.500ZM3.500 0.500L6 3L3.500 5.500Z" fill="#d0d0d0"/></svg>
 <!-- COLOR PANEL -->
 <div class="ptabs" style="top:10px">
  <span class="on" style="left:1px;width:34px;padding-left:9px">颜色</span>
  <span style="left:35px;width:49px">颜色参考</span>
  <span style="left:84px;width:31px">描边</span>
  <span style="left:115px;width:31px">渐变</span>
 </div>
 <svg class="abs" style="left:4px;top:13px" width="6" height="9" viewBox="0 0 6 9"><path d="M0.500 3.500L3 1L5.500 3.500M0.500 5.500L3 8L5.500 5.500" fill="none" stroke="#e0e0e0" stroke-width="1.100"/></svg>
 <svg class="abs" style="left:174px;top:14px" width="12" height="7" viewBox="0 0 12 7"><path d="M0 1.500h4l-2 2.500z" fill="#d0d0d0"/><path d="M5.500 1h6M5.500 3.500h6M5.500 6h6" stroke="#d0d0d0" stroke-width="1"/></svg>
 <!-- default/swap -->
 <svg class="abs" style="left:5px;top:30px" width="26" height="12" viewBox="0 0 26 12">
  <rect x="1.500" y="1.500" width="5" height="5" fill="#f0f0f0" stroke="#222" stroke-width="0.700"/><rect x="4.500" y="4.500" width="5" height="5" fill="#1c1c1c" stroke="#e8e8e8" stroke-width="0.900"/>
  <path d="M15 3.500L18 1V2.700C21 2.700 22 4 22 6.500H23.500L21.300 9.500L19 6.500H20.500C20.500 5 20 4.300 18 4.300V6Z" fill="#d8d8d8"/>
 </svg>
 <div class="abs" style="left:14px;top:52px;width:14.500px;height:14.500px;background:#fff"></div>
 <svg class="abs" style="left:13px;top:51px" width="17" height="17" viewBox="0 0 17 17"><rect x="5" y="5" width="6" height="6" fill="#444"/><path d="M0.500 16.500L16 1" stroke="#c8232c" stroke-width="1.500"/></svg>
 <div class="abs" style="left:6px;top:44px;width:14.500px;height:14.500px;background:#f9c4b3"></div>
 <svg class="abs" style="left:9px;top:77px" width="12" height="12" viewBox="0 0 12 12"><path d="M6 1L10.500 3.200V8.500L6 11L1.500 8.500V3.200ZM1.500 3.200L6 5.500L10.500 3.200M6 5.500V11" fill="none" stroke="#cfcfcf" stroke-width="1"/></svg>
 <div class="abs" style="left:24px;top:77px;width:11.500px;height:11.500px;background:#f8c6c4;border:0.500px solid #ddd"></div>
 <!-- sliders -->
 <div class="lab" style="top:34px">C</div><div class="sl" style="top:37px;background:linear-gradient(90deg,#f9c4b3,#7fa2ae 50%,#008fc0)"></div><div class="th" style="left:54px;top:41.500px"></div><div class="val" style="top:32px">0<em>.</em>94</div><div class="pct" style="top:35px">%</div>
 <div class="lab" style="top:53.500px">M</div><div class="sl" style="top:56.500px;background:linear-gradient(90deg,#fdf2c0,#f48aa0 50%,#e8106c)"></div><div class="th" style="left:71px;top:61px"></div><div class="val" style="top:51.500px">22<em>.</em>95</div><div class="pct" style="top:54.500px">%</div>
 <div class="lab" style="top:73px">Y</div><div class="sl" style="top:76px;background:linear-gradient(90deg,#f6b8d4,#f9c090 45%,#ffcb05)"></div><div class="th" style="left:69px;top:80.500px"></div><div class="val" style="top:71px">20<em>.</em>55</div><div class="pct" style="top:74px">%</div>
 <div class="lab" style="top:92.500px">K</div><div class="sl" style="top:95.500px;background:linear-gradient(90deg,#f9c4b3,#7a5f58 50%,#0a0a0a)"></div><div class="th" style="left:54px;top:100px"></div><div class="val" style="top:90.500px">0<em>.</em>09</div><div class="pct" style="top:93.500px">%</div>
 <!-- none/black/white -->
 <div class="abs" style="left:6px;top:114px;width:10px;height:11px;background:#fff"></div>
 <svg class="abs" style="left:6px;top:114px" width="10" height="11"><path d="M0.500 10.500L9.500 0.500" stroke="#d0202a" stroke-width="1.300"/></svg>
 <div class="abs" style="left:16px;top:114px;width:10.500px;height:11px;background:#000"></div>
 <div class="abs" style="left:26.500px;top:114px;width:10px;height:11px;background:#fff"></div>
 <!-- spectrum -->
 <div class="abs" style="left:6px;top:133px;width:170px;height:70px;border:1px solid #2c2c2c;background:linear-gradient(180deg,#fff 0%,rgba(255,255,255,0.6) 20%,rgba(255,255,255,0) 50%,rgba(0,0,0,0) 58%,rgba(0,0,0,0.55) 80%,#000 100%),linear-gradient(90deg,#ee1c25 0%,#f7941d 8%,#fff200 16%,#8cc63f 24%,#1a9a3c 33%,#109a48 43%,#14a8d8 53%,#2a4aa8 60%,#1c1a84 68%,#7a1c90 77%,#ec1090 86%,#ee1c25 100%)"></div>
 <!-- LAYERS PANEL -->
 <div class="abs" style="left:0;top:208.500px;width:188px;height:2px;background:#2e2e2e"></div>
 <div class="ptabs" style="top:211px">
  <span style="left:1px;width:29px">色板</span>
  <span style="left:30px;width:21px;overflow:hidden;text-align:left">画笔</span>
  <span class="on" style="left:51px;width:29px">图层</span>
  <span style="left:81px;width:40px;overflow:hidden;text-align:left;padding-left:4px">路径查找</span>
  <span style="left:121px;width:26px">对齐</span>
 </div>
 <svg class="abs" style="left:174px;top:215px" width="12" height="7" viewBox="0 0 12 7"><path d="M0 1.500h4l-2 2.500z" fill="#d0d0d0"/><path d="M5.500 1h6M5.500 3.500h6M5.500 6h6" stroke="#d0d0d0" stroke-width="1"/></svg>
 <div id="layers" class="abs" style="left:0;top:229px;width:188px;height:166px">
  <div class="abs" style="left:4px;top:0;width:171px;height:166px;background:#585858;border:1px solid #3a3a3a"></div>
  <div class="abs" style="left:21px;top:1px;width:1px;height:164px;background:#474747"></div>
  <div class="abs" style="left:146px;top:1px;width:1px;height:164px;background:#4c4c4c"></div>
  <div class="abs" style="left:175px;top:0;width:11px;height:166px;background:#3a3a3a"></div>
  <div class="abs" style="left:175px;top:91px;width:10px;height:62px;background:#8e8e8e"></div>
  <div class="abs" style="left:177px;top:5px;width:0;height:0;border-left:3.500px solid transparent;border-right:3.500px solid transparent;border-bottom:4.500px solid #eee"></div>
  <div class="abs" style="left:177px;top:157px;width:0;height:0;border-left:3.500px solid transparent;border-right:3.500px solid transparent;border-top:4.500px solid #eee"></div>
  <div class="row" style="top:1.00px"><svg class="abs" style="left:3px;top:3.500px" width="12" height="9" viewBox="0 0 12 9"><path d="M0.500 4.500C3 0.800 9 0.800 11.500 4.500C9 8.200 3 8.200 0.500 4.500Z" fill="#d8d8d8"/><circle cx="6" cy="4.600" r="2.300" fill="#333"/><circle cx="5.300" cy="3.900" r="0.800" fill="#ddd"/></svg><i></i><s></s><b><svg width="13" height="14" viewBox="0 0 13 14" style="display:block"><path d="M2 2h8l2 5-2 5H2z" fill="#ffd21e"/><path d="M3 1.500C7 1 11 3 11.500 8" stroke="#f7a800" fill="none"/></svg></b><u></u></div>
<div class="row" style="top:17.35px"><svg class="abs" style="left:3px;top:3.500px" width="12" height="9" viewBox="0 0 12 9"><path d="M0.500 4.500C3 0.800 9 0.800 11.500 4.500C9 8.200 3 8.200 0.500 4.500Z" fill="#d8d8d8"/><circle cx="6" cy="4.600" r="2.300" fill="#333"/><circle cx="5.300" cy="3.900" r="0.800" fill="#ddd"/></svg><i></i><s></s><b><svg width="13" height="14" viewBox="0 0 13 14" style="display:block"><path d="M3 5c0-5 8-5 8 0v2H3z" fill="#5a2a1c"/><path d="M4 6h5v5l-2 2-3-2z" fill="#f6c6b6"/></svg></b><u></u></div>
<div class="row" style="top:33.70px"><svg class="abs" style="left:3px;top:3.500px" width="12" height="9" viewBox="0 0 12 9"><path d="M0.500 4.500C3 0.800 9 0.800 11.500 4.500C9 8.200 3 8.200 0.500 4.500Z" fill="#d8d8d8"/><circle cx="6" cy="4.600" r="2.300" fill="#333"/><circle cx="5.300" cy="3.900" r="0.800" fill="#ddd"/></svg><i></i><b><svg width="13" height="14" viewBox="0 0 13 14" style="display:block"><path d="M3 0v14M10.500 0v14" stroke="#9ab4dc" stroke-width="1"/><rect x="4" y="1" width="6" height="12" fill="#fbfbff"/></svg></b><u></u></div>
<div class="row" style="top:50.05px"><svg class="abs" style="left:3px;top:3.500px" width="12" height="9" viewBox="0 0 12 9"><path d="M0.500 4.500C3 0.800 9 0.800 11.500 4.500C9 8.200 3 8.200 0.500 4.500Z" fill="#d8d8d8"/><circle cx="6" cy="4.600" r="2.300" fill="#333"/><circle cx="5.300" cy="3.900" r="0.800" fill="#ddd"/></svg><i></i><b><svg width="13" height="14" viewBox="0 0 13 14" style="display:block"><rect x="3.500" y="1.500" width="6.500" height="11.500" rx="2.500" fill="#f2603a"/><rect x="6" y="1.500" width="4" height="11.500" rx="2" fill="#f58a5a"/></svg></b><u></u></div>
<div class="row" style="top:66.40px"><svg class="abs" style="left:3px;top:3.500px" width="12" height="9" viewBox="0 0 12 9"><path d="M0.500 4.500C3 0.800 9 0.800 11.500 4.500C9 8.200 3 8.200 0.500 4.500Z" fill="#d8d8d8"/><circle cx="6" cy="4.600" r="2.300" fill="#333"/><circle cx="5.300" cy="3.900" r="0.800" fill="#ddd"/></svg><i></i><s></s><b><svg width="13" height="14" viewBox="0 0 13 14" style="display:block"><path d="M4 0L3 13M5.500 0L6.500 7L5 14M9 0L10 13" stroke="#5f86c4" stroke-width="1.600" fill="none"/></svg></b><u></u></div>
<div class="row" style="top:82.75px"><svg class="abs" style="left:3px;top:3.500px" width="12" height="9" viewBox="0 0 12 9"><path d="M0.500 4.500C3 0.800 9 0.800 11.500 4.500C9 8.200 3 8.200 0.500 4.500Z" fill="#d8d8d8"/><circle cx="6" cy="4.600" r="2.300" fill="#333"/><circle cx="5.300" cy="3.900" r="0.800" fill="#ddd"/></svg><i></i><b><svg width="13" height="14" viewBox="0 0 13 14" style="display:block"><path d="M1 3C5 4 10 7 12.500 11C8 11.500 3 9 1 3Z" fill="#8a3a12"/></svg></b><u></u></div>
<div class="row" style="top:99.10px"><svg class="abs" style="left:3px;top:3.500px" width="12" height="9" viewBox="0 0 12 9"><path d="M0.500 4.500C3 0.800 9 0.800 11.500 4.500C9 8.200 3 8.200 0.500 4.500Z" fill="#d8d8d8"/><circle cx="6" cy="4.600" r="2.300" fill="#333"/><circle cx="5.300" cy="3.900" r="0.800" fill="#ddd"/></svg><i></i><b><svg width="13" height="14" viewBox="0 0 13 14" style="display:block"><path d="M1 4C5 4.500 10 7 12.500 11.500C8 12 3 9.500 1 4Z" fill="#8a3a12"/></svg></b><u></u></div>
<div class="row" style="top:115.45px"><svg class="abs" style="left:3px;top:3.500px" width="12" height="9" viewBox="0 0 12 9"><path d="M0.500 4.500C3 0.800 9 0.800 11.500 4.500C9 8.200 3 8.200 0.500 4.500Z" fill="#d8d8d8"/><circle cx="6" cy="4.600" r="2.300" fill="#333"/><circle cx="5.300" cy="3.900" r="0.800" fill="#ddd"/></svg><i></i><b><svg width="13" height="14" viewBox="0 0 13 14" style="display:block"><path d="M1.500 10C2 5 6 1.500 11.500 2.500" stroke="#f26a72" stroke-width="3" fill="none"/></svg></b><u></u></div>
<div class="row" style="top:131.80px"><i></i><b><svg width="13" height="14" viewBox="0 0 13 14" style="display:block"><path d="M3 1.500L10 12" stroke="#f6c4b4" stroke-width="4.500" fill="none"/></svg></b><u></u></div>
<div class="row" style="top:148.15px"><svg class="abs" style="left:3px;top:3.500px" width="12" height="9" viewBox="0 0 12 9"><path d="M0.500 4.500C3 0.800 9 0.800 11.500 4.500C9 8.200 3 8.200 0.500 4.500Z" fill="#d8d8d8"/><circle cx="6" cy="4.600" r="2.300" fill="#333"/><circle cx="5.300" cy="3.900" r="0.800" fill="#ddd"/></svg><i></i><b><svg width="13" height="14" viewBox="0 0 13 14" style="display:block"><path d="M3.500 1.500L8 2L11 12.500L5 13Z" fill="#e02428"/></svg></b><u></u></div>

 </div>
 <div class="abs song" style="left:5px;top:395px;font-size:10.500px;line-height:13px;color:#e4e4e4;font-weight:bold">1 个图层</div>

 <svg class="abs" style="left:74px;top:394px" width="100" height="16" viewBox="886 417 100 16">
  <circle cx="893" cy="423.500" r="3.200" fill="none" stroke="#6e6e6e" stroke-width="1.300"/><path d="M891 426L887.500 430" stroke="#6e6e6e" stroke-width="1.500"/>
  <rect x="909" y="420.500" width="8" height="8.500" fill="none" stroke="#6a6a6a" stroke-width="1"/><rect x="911.500" y="423" width="4" height="4.500" fill="#6a6a6a"/>
  <path d="M929 421.500h3.500v3M929 421.500v3h2" stroke="#e8e8e8" stroke-width="1.300" fill="none"/><rect x="933.500" y="422" width="6.500" height="7" fill="#e8e8e8"/>
  <path d="M951.500 420.500h8.500v8.500h-4.500v-4h-4z" fill="#e8e8e8"/>
  <path d="M970.500 422.500h8M973 421h3M971.500 423.500l0.700 6h4.600l0.700-6" stroke="#6a6a6a" stroke-width="1.100" fill="none"/>
 </svg>
 <!-- TRANSPARENCY PANEL -->
 <div class="abs" style="left:0;top:409px;width:188px;height:2px;background:#2e2e2e"></div>
 <div class="ptabs" style="top:411px"><span class="on" style="left:1px;width:42px;padding-left:9px">透明度</span></div>
 <svg class="abs" style="left:4px;top:414px" width="6" height="9" viewBox="0 0 6 9"><path d="M0.500 3.500L3 1L5.500 3.500M0.500 5.500L3 8L5.500 5.500" fill="none" stroke="#e0e0e0" stroke-width="1.100"/></svg>
 <svg class="abs" style="left:174px;top:415px" width="12" height="7" viewBox="0 0 12 7"><path d="M0 1.500h4l-2 2.500z" fill="#d0d0d0"/><path d="M5.500 1h6M5.500 3.500h6M5.500 6h6" stroke="#d0d0d0" stroke-width="1"/></svg>
 <div class="abs song" style="left:6px;top:430px;width:61px;height:14px;background:#5a5a5a;border:1px solid #3a3a3a;font-size:10px;line-height:12px;color:#e0e0e0;padding-left:5px">正常</div>
 <svg class="abs" style="left:57px;top:435px" width="7" height="5"><path d="M0 0h7l-3.500 4.500z" fill="#e0e0e0"/></svg>
 <div class="abs song" style="left:74px;top:431px;font-size:10px;line-height:12px;color:#ddd;white-space:nowrap">不透明度:</div>
 <div class="abs" style="left:126px;top:430px;width:40px;height:14px;background:#a6a6a6;border:1px solid #6a6a6a;color:#222;font:10px/12px 'Liberation Sans',sans-serif;padding-left:2px">100%</div>
 <div class="abs" style="left:167px;top:430px;width:12px;height:14px;background:#5c5c5c;border:1px solid #3a3a3a"></div>
 <svg class="abs" style="left:171px;top:433.500px" width="5" height="7"><path d="M0 0v7l5-3.500z" fill="#e8e8e8"/></svg>
 <div class="abs" style="left:180px;top:424px;width:20px;height:20px;border-radius:50%;background:#4b7c5c;border:1px solid #3c6a4c"></div>
 <div class="abs" style="left:6px;top:474px;width:101px;height:26px;border:1px solid #333;background:#454545"></div>
 <div class="abs song" style="left:115px;top:457px;width:52px;height:14px;border:1px solid #6a6a6a;background:#555;font-size:10px;line-height:12px;color:#9a9a9a;text-align:center;white-space:nowrap">制作蒙版</div>
 <div class="abs" style="left:116px;top:480px;width:7px;height:7px;border:1px solid #5e5e5e;background:#4c4c4c"></div>
 <div class="abs song" style="left:126px;top:477px;font-size:10px;line-height:13px;color:#8e8e8e">剪切</div>
 <div class="abs" style="left:116px;top:494px;width:7px;height:7px;border:1px solid #5e5e5e;background:#4c4c4c"></div>
 <div class="abs song" style="left:126px;top:491px;font-size:10px;line-height:13px;color:#8e8e8e;white-space:nowrap">反相蒙版</div>
 <div class="abs" style="left:178px;top:482px;width:10px;height:26px;background:#2e2e2e"></div>
</div>
<div id="status" class="abs" style="left:58px;top:517.500px;width:740px;height:14px;background:#2b2b2b">
 <div class="abs" style="left:0;top:0;width:374px;height:14px;background:#3e3e3e"></div>
 <div class="abs" style="left:6px;top:3px;width:15px;height:8.500px;border-radius:2px;background:#5c5c5c"></div>
 <svg class="abs" style="left:8px;top:4.500px" width="12" height="6"><circle cx="3" cy="3" r="1.800" fill="none" stroke="#3e3e3e" stroke-width="1"/><path d="M7 1l3 2-3 2z" fill="#3e3e3e"/></svg>
 <svg class="abs" style="left:29px;top:2px" width="12" height="10" viewBox="0 0 12 10"><path d="M5 1.500H1.500V8.500H9V6" fill="none" stroke="#e0e0e0" stroke-width="1.300"/><path d="M4 6.500C4 3.500 6 2.500 8 2.500V0.800L11.500 3.500L8 6V4.300C6.500 4.300 5 4.800 4 6.500Z" fill="#e0e0e0"/></svg>
 <div class="abs" style="left:49px;top:2.500px;width:32.500px;height:11.500px;background:#a8a8a8;color:#1e1e1e;font:10px/11.500px 'Liberation Serif',serif;letter-spacing:0.400px;padding-left:1px;white-space:nowrap;overflow:hidden">119<em>.</em>46</div>
 <div class="abs" style="left:83px;top:2.500px;width:10px;height:11.500px;background:#5a5a5a"></div>
 <svg class="abs" style="left:85px;top:6.500px" width="6" height="4"><path d="M0 0h6L3 4z" fill="#f0f0f0"/></svg>
 <svg class="abs" style="left:99px;top:4px" width="20" height="7" viewBox="0 0 20 7"><path d="M1 0v7M7 0L2 3.500L7 7zM18.500 0.500L14.500 3.500L18.500 6.500z" fill="#666" stroke="#666" stroke-width="1"/></svg>
 <div class="abs" style="left:127px;top:2.500px;width:32.500px;height:11.500px;background:#9e9e9e;color:#1e1e1e;font:10px/11.500px 'Liberation Serif',serif;padding-left:2px">1</div>
 <div class="abs" style="left:160.500px;top:2.500px;width:10px;height:11.500px;background:#5a5a5a"></div>
 <svg class="abs" style="left:162.500px;top:6.500px" width="6" height="4"><path d="M0 0h6L3 4z" fill="#f0f0f0"/></svg>
 <svg class="abs" style="left:178px;top:4px" width="22" height="7" viewBox="0 0 22 7"><path d="M1.500 0.500L5.500 3.500L1.500 6.500zM14 0L19 3.500L14 7zM20.500 0v7" fill="#666" stroke="#666" stroke-width="1"/></svg>
 <div class="abs song" style="left:264px;top:3px;font-size:9.500px;line-height:12px;color:#e0e0e0;white-space:nowrap;font-weight:bold">直接选择</div>
 <svg class="abs" style="left:365px;top:3.500px" width="5" height="7"><path d="M0 0v7l4.500-3.500z" fill="#e8e8e8"/></svg>
 <svg class="abs" style="left:378px;top:3.500px" width="5" height="7"><path d="M5 0v7L0.500 3.500z" fill="#e8e8e8"/></svg>
 <div class="abs" style="left:551px;top:1.500px;width:11.500px;height:12.500px;background:#9a9a9a"></div>
</div>
<!-- IME bar -->
<div class="abs" style="left:688px;top:508px;width:115.500px;height:19px;background:#fff;border-radius:3px;box-shadow:0 0 1px #999"></div>
<svg class="abs" style="left:674px;top:503px" width="132" height="28" viewBox="674 503 132 28">
 <g transform="rotate(-9 687 516.5)"><rect x="677" y="507" width="20.500" height="19.500" rx="4" fill="#3cab34"/>
 <path d="M693 512.500C690 510.500 683 510.500 682.500 513.500C682 516.500 692.500 516 692 519.500C691.500 522.800 684 522.500 681 520" fill="none" stroke="#fff" stroke-width="3" stroke-linecap="round"/></g>
 <text x="701.500" y="522.500" font-family="'Liberation Sans','Noto Sans CJK SC',sans-serif" font-weight="bold" font-size="12.500" fill="#3b4056">五</text>
 <path d="M727 513C729.500 517 727.500 521 720.500 521.500C724 524.500 731.500 523 731 517C730.800 515 729 513.200 727 513Z" fill="#3b4056"/>
 <circle cx="738.800" cy="515.500" r="1.100" fill="none" stroke="#3b4056" stroke-width="0.900"/>
 <path d="M743.500 518.500a1.500 1.500 0 1 1 1.300 1.600c0 1.200-0.800 2-1.800 2.400c1-0.800 1.300-1.600 0.900-2.600z" fill="#3b4056"/>
 <rect x="753.500" y="513.500" width="12.500" height="8.500" rx="1.300" fill="#3b4056"/>
 <path d="M755.500 515.800h8.500M755.500 517.800h8.500" stroke="#fff" stroke-width="1" stroke-dasharray="1.200 0.900"/><path d="M757 520h5.500" stroke="#fff" stroke-width="1"/>
 <circle cx="776" cy="514.800" r="2.400" fill="#b9d3ca"/><path d="M771 523C771 518 781 518 781 523Z" fill="#b9d3ca"/>
 <path d="M789 523L794.500 517.500" stroke="#3b4056" stroke-width="2.600" stroke-linecap="round"/>
 <path d="M796.500 511.800A3.600 3.600 0 1 0 800.200 515.500L797.500 516.500L795.800 514.800Z" fill="#3b4056"/>
</svg>
<!-- watermark -->
<div class="abs" style="left:798px;top:420px;width:170px;height:111px;overflow:hidden;pointer-events:none">
 <div class="abs" style="left:7px;top:24px;width:40px;height:30px;overflow:hidden"><div class="abs" style="left:-16px;top:0;font:bold 25px/30px 'Liberation Sans',sans-serif;color:#ececec;letter-spacing:-0.500px">Bai</div></div>
 <svg class="abs" style="left:0;top:0" width="170" height="111" viewBox="798 420 170 111">
  <g fill="#d2d2d2">
   <ellipse cx="846" cy="430.500" rx="5.500" ry="8" transform="rotate(-6 846 430.500)"/>
   <ellipse cx="863.500" cy="432" rx="6" ry="8" transform="rotate(8 863.500 432)"/>
   <ellipse cx="834.500" cy="446.500" rx="5.800" ry="8" transform="rotate(-18 834.500 446.500)"/>
   <ellipse cx="875.500" cy="449" rx="5.800" ry="7.800" transform="rotate(14 875.500 449)"/>
  </g>
  <path d="M855.500 446.500C849 446.500 845 453 840 459C836 464 835 468 837 472H876C878 468 877 464 872 459C867 453 862 446.500 855.500 446.500Z" fill="#ededed"/>
  <text x="842.500" y="471" font-family="'Liberation Sans',sans-serif" font-weight="bold" font-size="17" fill="#4a4a4a">du</text>
  <text x="883" y="472.500" font-family="'Liberation Sans','Noto Sans CJK SC',sans-serif" font-weight="bold" font-size="29" fill="#f2f2f2" letter-spacing="-0.500">经验</text>
  <path d="M813 500C811 505 806 508 800 511" stroke="#e8e8e8" stroke-width="1.600" fill="none" stroke-dasharray="5 2"/>
 </svg>
 <div class="abs" style="left:7px;top:48px;width:144px;height:33px;background:#474747;border-radius:9px;filter:blur(0.800px)"></div>
 <div class="abs" style="left:11px;top:70px;width:100px;height:14px;background:#474747;border-radius:7px;filter:blur(0.800px)"></div>
 <div class="abs" style="left:52px;top:65.500px;width:2px;height:1.500px;background:#ddd"></div>
 <div class="abs" style="left:74px;top:65.500px;width:2px;height:1.500px;background:#ddd"></div>
 <div class="abs" style="left:87px;top:65.500px;width:2px;height:1.500px;background:#ddd"></div>
</div>
</body></html>
